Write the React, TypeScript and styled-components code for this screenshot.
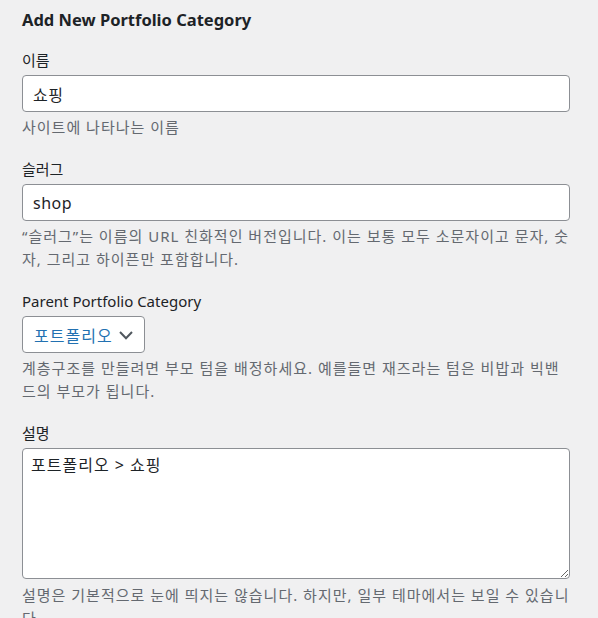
import React from "react";
import styled, { createGlobalStyle } from "styled-components";

const GlobalStyle = createGlobalStyle`
    html, body {
        margin: 0;
        padding: 0;
        background: #f0f0f1;
    }
    body {
        font-family: "Noto Sans", "Noto Sans CJK KR", sans-serif;
        color: #1d2327;
    }
`;

const Wrap = styled.div`
    width: 548px;
    padding: 8px 0 0 22px;
`;

const Title = styled.h2`
    margin: 0 0 18px;
    font-size: 16.5px;
    line-height: 24px;
    font-weight: 700;
    color: #1d2327;
`;

const Field = styled.div`
    margin-bottom: 20px;
`;

const Label = styled.label`
    display: block;
    font-size: 15px;
    line-height: 21px;
    margin-bottom: 4px;
`;

const TextInput = styled.input`
    box-sizing: border-box;
    display: block;
    width: 100%;
    height: 37px;
    margin: 0;
    padding: 0 10px;
    font-family: inherit;
    font-size: 16px;
    letter-spacing: 0.5px;
    color: #1d2327;
    background: #fff;
    border: 1px solid #8c8f94;
    border-radius: 4px;
    outline: none;
`;

const Description = styled.p`
    margin: 4px 0 0;
    font-size: 15px;
    line-height: 23px;
    letter-spacing: 1px;
    color: #646970;
`;

const SelectBox = styled.div`
    box-sizing: border-box;
    display: inline-flex;
    align-items: center;
    gap: 5px;
    height: 37px;
    padding: 0 10px 0 11px;
    font-size: 16px;
    letter-spacing: 1px;
    color: #2271b1;
    background: #fff;
    border: 1px solid #8c8f94;
    border-radius: 4px;
`;

const TextArea = styled.textarea`
    box-sizing: border-box;
    display: block;
    width: 100%;
    height: 131px;
    margin: 0 0 5px;
    padding: 4px 8px;
    font-family: inherit;
    font-size: 16px;
    line-height: 24px;
    letter-spacing: 1px;
    color: #1d2327;
    background: #fff;
    border: 1px solid #8c8f94;
    border-radius: 4px;
    outline: none;
`;

const Chevron = () => (
    <svg width="16" height="16" viewBox="0 0 16 16" fill="none">
        <path d="M2 5l6 6.2 6-6.2" stroke="#50575e" strokeWidth="2" />
    </svg>
);

export default function App() {
    return (
        <>
            <GlobalStyle />
            <Wrap>
                <Title>Add New Portfolio Category</Title>

                <Field>
                    <Label htmlFor="tag-name">이름</Label>
                    <TextInput id="tag-name" defaultValue="쇼핑" />
                    <Description>사이트에 나타나는 이름</Description>
                </Field>

                <Field>
                    <Label htmlFor="tag-slug">슬러그</Label>
                    <TextInput id="tag-slug" defaultValue="shop" />
                    <Description>
                        “슬러그”는 이름의 URL 친화적인 버전입니다. 이는 보통 모두 소문자이고 문자, 숫자, 그리고 하이픈만 포함합니다.
                    </Description>
                </Field>

                <Field>
                    <Label>Parent Portfolio Category</Label>
                    <SelectBox>
                        <span>포트폴리오</span>
                        <Chevron />
                    </SelectBox>
                    <Description>
                        계층구조를 만들려면 부모 텀을 배정하세요. 예를들면 재즈라는 텀은 비밥과 빅밴드의 부모가 됩니다.
                    </Description>
                </Field>

                <Field>
                    <Label htmlFor="tag-description">설명</Label>
                    <TextArea id="tag-description" defaultValue="포트폴리오 > 쇼핑" />
                    <Description>
                        설명은 기본적으로 눈에 띄지는 않습니다. 하지만, 일부 테마에서는 보일 수 있습니다.
                    </Description>
                </Field>
            </Wrap>
        </>
    );
}
